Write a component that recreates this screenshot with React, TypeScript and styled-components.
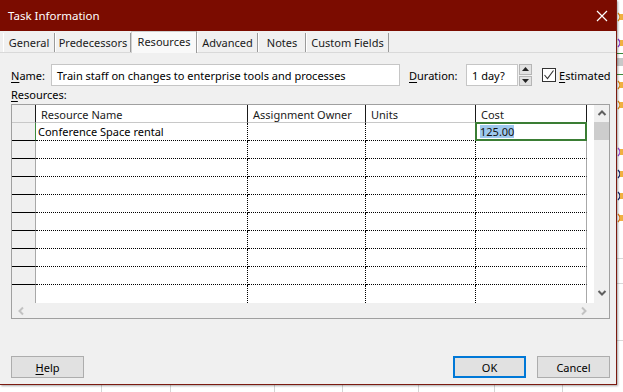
import React from 'react';
import styled, { createGlobalStyle, css } from 'styled-components';

const FONT = `"Noto Sans", "Open Sans", "DejaVu Sans", sans-serif`;

const GlobalStyle = createGlobalStyle`
  html, body { margin: 0; padding: 0; background: #fff; }
  body { font-family: ${FONT}; }
  * { box-sizing: border-box; }
`;

const Page = styled.div`
  position: relative;
  width: 623px;
  height: 392px;
  overflow: hidden;
  background: #fff;
`;

const Backdrop = styled.svg`
  position: absolute;
  left: 0;
  top: 0;
`;

const Dialog = styled.div`
  position: absolute;
  left: 0;
  top: 0;
  width: 617px;
  height: 385px;
  background: #f0f0f0;
  border-right: 1px solid #7b1a10;
  border-bottom: 1px solid #7b1a10;
  box-shadow: 1px 1px 2px rgba(0, 0, 0, 0.35);
  display: flex;
  flex-direction: column;
  font-family: ${FONT};
  font-size: 11px;
  color: #000;
`;

const TitleBar = styled.div`
  height: 31px;
  flex: none;
  background: #7b0c00;
  color: #fff;
  display: flex;
  align-items: center;
  justify-content: space-between;
  padding: 0 6px 0 8px;
  font-size: 11.5px;
`;

const CloseButton = styled.div`
  width: 16px;
  height: 16px;
  display: flex;
  align-items: center;
  justify-content: center;
`;

const TabStrip = styled.div`
  height: 22px;
  flex: none;
  display: flex;
  align-items: flex-end;
  padding-left: 3px;
  border-bottom: 1px solid #d9d9d9;
`;

const Tab = styled.div<{ $w: number; $active?: boolean }>`
  width: ${(p) => p.$w}px;
  height: 19px;
  display: flex;
  align-items: center;
  justify-content: center;
  border-left: 1px solid #ffffff;
  border-right: 1px solid #9a9a9a;
  color: #1a1a1a;
  ${(p) =>
    p.$active &&
    css`
      height: 22px;
      margin-bottom: -1px;
      background: #f9f9f9;
      border: 1px solid #d0d0d0;
      border-bottom: none;
      border-right: 1px solid #9a9a9a;
      align-items: flex-start;
      padding-top: 2px;
    `}
`;

const Body = styled.div`
  flex: 1;
  display: flex;
  flex-direction: column;
`;

const NameRow = styled.div`
  display: flex;
  align-items: center;
  height: 22px;
  margin-top: 11px;
  padding-left: 11px;
`;

const Label = styled.span<{ $w?: number; $ml?: number }>`
  ${(p) => p.$w && `width: ${p.$w}px;`}
  ${(p) => p.$ml && `margin-left: ${p.$ml}px;`}
  flex: none;
  white-space: nowrap;
`;

const U = styled.span`
  text-decoration: underline;
  text-underline-offset: 2px;
`;

const TextBox = styled.div<{ $w: number }>`
  width: ${(p) => p.$w}px;
  height: 22px;
  flex: none;
  background: #fff;
  border: 1px solid #c6c6c6;
  display: flex;
  align-items: center;
  padding-left: 5px;
  white-space: nowrap;
  overflow: hidden;
`;

const Spinner = styled.div`
  width: 13px;
  height: 22px;
  margin-left: 1px;
  flex: none;
  display: flex;
  flex-direction: column;
  gap: 1px;
`;

const SpinButton = styled.div`
  flex: 1;
  background: #e1e1e1;
  border: 1px solid #b5b5b5;
  display: flex;
  align-items: center;
  justify-content: center;
`;

const CheckBox = styled.div`
  width: 14px;
  height: 14px;
  margin-left: 10px;
  flex: none;
  background: #fff;
  border: 1px solid #333;
  display: flex;
  align-items: center;
  justify-content: center;
`;

const SectionLabel = styled.div`
  margin-top: 2px;
  height: 16px;
  line-height: 14px;
  padding-left: 11px;
`;

const GridBox = styled.div`
  margin-left: 11px;
  width: 599px;
  height: 215px;
  flex: none;
  border: 1px solid #a0a0a0;
  display: flex;
  flex-direction: column;
  background: #fff;
`;

const GridTop = styled.div`
  display: flex;
  height: 198px;
`;

const Table = styled.div`
  display: grid;
  grid-template-columns: 24px 212px 118px 110px 111px;
  grid-auto-rows: 18px;
  align-content: start;
`;

const Filler = styled.div`
  width: 7px;
  background: #fff;
`;

const HeaderCell = styled.div<{ $corner?: boolean }>`
  background: ${(p) => (p.$corner ? '#f0f0f0' : '#ffffff')};
  border-bottom: 1px solid #c8c8c8;
  border-right: 1px solid #1a1a1a;
  padding-left: 5px;
  padding-top: 2px;
  display: flex;
  align-items: center;
  white-space: nowrap;
  overflow: hidden;
  color: #1a1a1a;
`;

const RowHead = styled.div<{ $last?: boolean; $active?: boolean }>`
  background: #f0f0f0;
  border-bottom: ${(p) => (p.$last ? 'none' : '1px solid #000')};
  border-right: 1px solid ${(p) => (p.$active ? '#3c8a3c' : '#a8a8a8')};
`;

const Cell = styled.div<{ $last?: boolean; $end?: boolean }>`
  position: relative;
  border-bottom: ${(p) => (p.$last ? 'none' : '1px dotted #000')};
  border-right: ${(p) => (p.$end ? '1px solid #a8a8a8' : '1px dotted #000')};
  padding-left: 2px;
  display: flex;
  align-items: center;
  white-space: nowrap;
  overflow: ${(p) => (p.$end ? 'visible' : 'hidden')};
`;

const ActiveFrame = styled.div`
  position: absolute;
  left: -1px;
  top: -1px;
  right: -1px;
  bottom: -1px;
  border: 2px solid #3a7d34;
  pointer-events: none;
  z-index: 2;
`;

const Selected = styled.span`
  background: #9ec8ee;
  margin-left: 2px;
  line-height: 13px;
  color: #111;
`;

const VScroll = styled.div`
  width: 15px;
  background: #f0f0f0;
  display: flex;
  flex-direction: column;
`;

const ScrollArrow = styled.div<{ $h?: number }>`
  height: ${(p) => p.$h ?? 17}px;
  flex: none;
  display: flex;
  align-items: center;
  justify-content: center;
`;

const Thumb = styled.div`
  height: 18px;
  flex: none;
  background: #cdcdcd;
`;

const Track = styled.div`
  flex: 1;
`;

const HScroll = styled.div`
  height: 15px;
  background: #f0f0f0;
  display: flex;
  align-items: center;
  justify-content: space-between;
  padding: 0 20px 0 5px;
`;

const ButtonRow = styled.div`
  margin-top: auto;
  display: flex;
  align-items: center;
  padding: 0 6px 6px 11px;
`;

const Button = styled.div<{ $default?: boolean; $ml?: number }>`
  width: 73px;
  height: 22px;
  flex: none;
  background: #e1e1e1;
  border: ${(p) => (p.$default ? '2px solid #0078d7' : '1px solid #adadad')};
  display: flex;
  align-items: center;
  justify-content: center;
  ${(p) => p.$ml !== undefined && `margin-left: ${p.$ml}px;`}
  color: #000;
`;

const Spacer = styled.div`
  flex: 1;
`;

const Chevron = ({ dir, color }: { dir: 'up' | 'down' | 'left' | 'right'; color: string }) => {
  const d =
    dir === 'up'
      ? 'M1.5 6 L5 2.5 L8.5 6'
      : dir === 'down'
      ? 'M1.5 3 L5 6.5 L8.5 3'
      : dir === 'left'
      ? 'M6 1.5 L2.5 5 L6 8.5'
      : 'M3 1.5 L6.5 5 L3 8.5';
  return (
    <svg width="10" height="10" viewBox="0 0 10 10">
      <path d={d} fill="none" stroke={color} strokeWidth="2" />
    </svg>
  );
};

const columns = ['Resource Name', 'Assignment Owner', 'Units', 'Cost'];
const ROWS = 10;

export default function App() {
  const rows = Array.from({ length: ROWS }, (_, i) => i);
  return (
    <>
      <GlobalStyle />
      <Page>
        <Backdrop width="623" height="392" viewBox="0 0 623 392">
          <rect x="0" y="0" width="623" height="392" fill="#fff" />
          {[101, 170, 274, 342, 418, 494, 562].map((x) => (
            <line key={x} x1={x + 0.5} y1="385" x2={x + 0.5} y2="392" stroke="#d4d4d4" />
          ))}
          {[258, 283, 340].map((y) => (
            <line key={y} x1="617" y1={y + 0.5} x2="623" y2={y + 0.5} stroke="#d8d8d8" />
          ))}
          <line x1="617" y1="53.5" x2="623" y2="53.5" stroke="#3a8a3a" />
          <rect x="617" y="58" width="6" height="8" fill="#c8c8c8" />
          <line x1="617" y1="74.5" x2="623" y2="74.5" stroke="#3a8a3a" />
          {[
            [17, '#e08a10'],
            [43, '#8a3ac8'],
            [85, '#e08a10'],
            [105, '#e08a10'],
            [152, '#9a4ad0'],
            [174, '#1a2a6a'],
            [196, '#1a2a6a'],
            [218, '#e07a10'],
          ].map(([y, c]) => (
            <g key={y as number}>
              <path
                d={`M618 ${(y as number) - 4} Q622 ${y as number} 618 ${(y as number) + 4}`}
                fill="none"
                stroke={c as string}
                strokeWidth="1.3"
              />
              <rect x="620" y={(y as number) - 3} width="3" height="6" fill="#f0b040" />
            </g>
          ))}
        </Backdrop>
        <Dialog>
          <TitleBar>
            <span>Task Information</span>
            <CloseButton>
              <svg width="12" height="12" viewBox="0 0 12 12">
                <path d="M1 1 L11 11 M11 1 L1 11" stroke="#fff" strokeWidth="1.2" />
              </svg>
            </CloseButton>
          </TitleBar>
          <TabStrip>
            <Tab $w={52}>General</Tab>
            <Tab $w={76}>Predecessors</Tab>
            <Tab $w={66} $active>
              Resources
            </Tab>
            <Tab $w={61}>Advanced</Tab>
            <Tab $w={48}>Notes</Tab>
            <Tab $w={83}>Custom Fields</Tab>
          </TabStrip>
          <Body>
            <NameRow>
              <Label $w={40}>
                <U>N</U>ame:
              </Label>
              <TextBox $w={349}>Train staff on changes to enterprise tools and processes</TextBox>
              <Label $w={57} $ml={9}>
                <U>D</U>uration:
              </Label>
              <TextBox $w={52}>1 day?</TextBox>
              <Spinner>
                <SpinButton>
                  <svg width="7" height="4" viewBox="0 0 7 4">
                    <path d="M0 4 L3.5 0 L7 4 Z" fill="#222" />
                  </svg>
                </SpinButton>
                <SpinButton>
                  <svg width="7" height="4" viewBox="0 0 7 4">
                    <path d="M0 0 L3.5 4 L7 0 Z" fill="#222" />
                  </svg>
                </SpinButton>
              </Spinner>
              <CheckBox>
                <svg width="12" height="12" viewBox="0 0 12 12">
                  <path d="M1.5 6 L4.5 9.5 L10.5 1.5" fill="none" stroke="#333" strokeWidth="1.1" />
                </svg>
              </CheckBox>
              <Label $ml={3}>
                <U>E</U>stimated
              </Label>
            </NameRow>
            <SectionLabel>
              <U>R</U>esources:
            </SectionLabel>
            <GridBox>
              <GridTop>
                <Table>
                  <HeaderCell $corner />
                  {columns.map((c) => (
                    <HeaderCell key={c}>{c}</HeaderCell>
                  ))}
                  {rows.map((r) => {
                    const last = r === ROWS - 1;
                    return (
                      <React.Fragment key={r}>
                        <RowHead $last={last} $active={r === 0} />
                        <Cell $last={last}>{r === 0 ? 'Conference Space rental' : ''}</Cell>
                        <Cell $last={last} />
                        <Cell $last={last} />
                        <Cell $last={last} $end>
                          {r === 0 && (
                            <>
                              <Selected>125.00</Selected>
                              <ActiveFrame />
                            </>
                          )}
                        </Cell>
                      </React.Fragment>
                    );
                  })}
                </Table>
                <Filler />
                <VScroll>
                  <ScrollArrow $h={17}>
                    <Chevron dir="up" color="#606060" />
                  </ScrollArrow>
                  <Thumb />
                  <Track />
                  <ScrollArrow $h={21}>
                    <Chevron dir="down" color="#606060" />
                  </ScrollArrow>
                </VScroll>
              </GridTop>
              <HScroll>
                <Chevron dir="left" color="#c2c2c2" />
                <Chevron dir="right" color="#c2c2c2" />
              </HScroll>
            </GridBox>
            <ButtonRow>
              <Button>
                <span>
                  <U>H</U>elp
                </span>
              </Button>
              <Spacer />
              <Button $default>OK</Button>
              <Button $ml={11}>Cancel</Button>
            </ButtonRow>
          </Body>
        </Dialog>
      </Page>
    </>
  );
}
